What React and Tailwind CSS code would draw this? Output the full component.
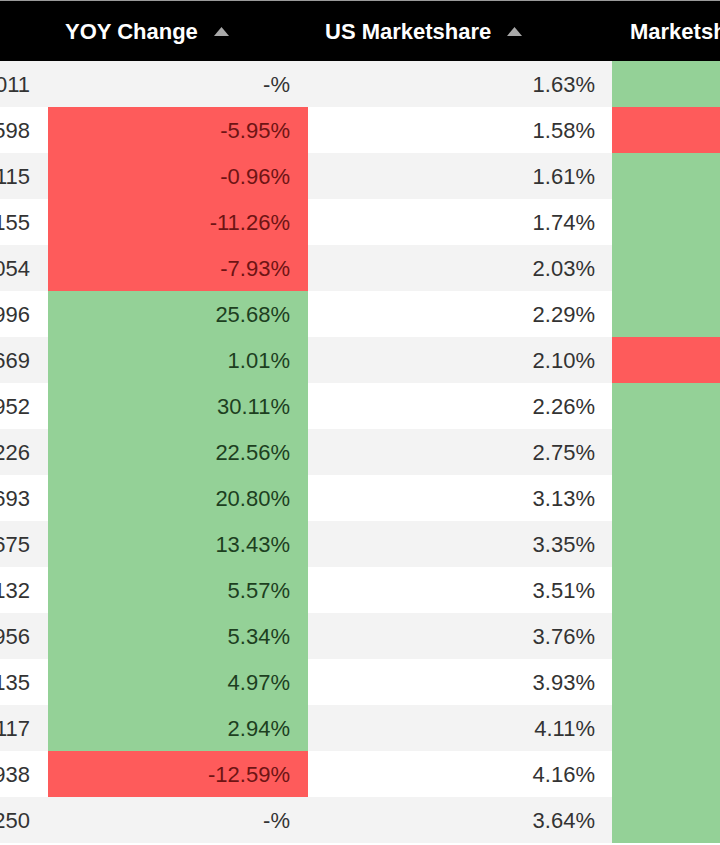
import React from "react";

const rows = [
  { total: "1,623,011", yoy: "-%", yoyTone: null, us: "1.63%", share: "g" },
  { total: "1,588,598", yoy: "-5.95%", yoyTone: "r", us: "1.58%", share: "r" },
  { total: "1,605,115", yoy: "-0.96%", yoyTone: "r", us: "1.61%", share: "g" },
  { total: "1,762,155", yoy: "-11.26%", yoyTone: "r", us: "1.74%", share: "g" },
  { total: "2,055,054", yoy: "-7.93%", yoyTone: "r", us: "2.03%", share: "g" },
  { total: "2,318,996", yoy: "25.68%", yoyTone: "g", us: "2.29%", share: "g" },
  { total: "2,126,669", yoy: "1.01%", yoyTone: "g", us: "2.10%", share: "r" },
  { total: "2,289,952", yoy: "30.11%", yoyTone: "g", us: "2.26%", share: "g" },
  { total: "2,786,226", yoy: "22.56%", yoyTone: "g", us: "2.75%", share: "g" },
  { total: "3,171,693", yoy: "20.80%", yoyTone: "g", us: "3.13%", share: "g" },
  { total: "3,393,675", yoy: "13.43%", yoyTone: "g", us: "3.35%", share: "g" },
  { total: "3,556,132", yoy: "5.57%", yoyTone: "g", us: "3.51%", share: "g" },
  { total: "3,809,956", yoy: "5.34%", yoyTone: "g", us: "3.76%", share: "g" },
  { total: "3,982,135", yoy: "4.97%", yoyTone: "g", us: "3.93%", share: "g" },
  { total: "4,164,117", yoy: "2.94%", yoyTone: "g", us: "4.11%", share: "g" },
  { total: "4,215,938", yoy: "-12.59%", yoyTone: "r", us: "4.16%", share: "g" },
  { total: "3,688,250", yoy: "-%", yoyTone: null, us: "3.64%", share: "g" },
];

const tone = {
  g: "bg-[#94d197] text-[#1d3f1f]",
  r: "bg-[#fe5b5b] text-[#6e1414]",
};

function SortArrow() {
  return (
    <svg width="15" height="9" viewBox="0 0 15 9" className="ml-4">
      <path d="M7.5 0 L15 9 L0 9 Z" fill="#a9a9a9" />
    </svg>
  );
}

function App() {
  return (
    <div className="w-[720px] h-[845px] overflow-hidden bg-white font-['Liberation_Sans',Arial,sans-serif] text-[22px]">
      <div className="grid grid-cols-[48px_260px_304px_1fr] h-[61px] bg-black border-t border-[#9a9a9a] text-white font-bold">
        <div />
        <div className="flex items-center pl-[17px]">
          YOY Change
          <SortArrow />
        </div>
        <div className="flex items-center pl-[17px]">
          US Marketshare
          <SortArrow />
        </div>
        <div className="flex items-center pl-[18px] whitespace-nowrap">
          Marketshare Change
        </div>
      </div>
      {rows.map((row, i) => (
        <div
          key={i}
          className={`grid grid-cols-[48px_260px_304px_1fr] h-[46px] text-[#333] ${
            i % 2 === 0 ? "bg-[#f3f3f3]" : "bg-white"
          }`}
        >
          <div className="flex items-center justify-end pr-[18px] overflow-hidden whitespace-nowrap">
            {row.total}
          </div>
          <div
            className={`flex items-center justify-end pr-[18px] ${
              row.yoyTone ? tone[row.yoyTone] : ""
            }`}
          >
            {row.yoy}
          </div>
          <div className="flex items-center justify-end pr-[17px]">{row.us}</div>
          <div className={tone[row.share]} />
        </div>
      ))}
    </div>
  );
}

export default App;
